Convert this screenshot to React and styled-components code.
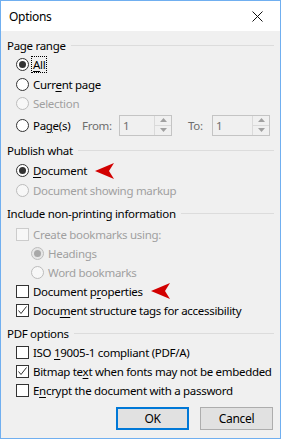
import React from "react";
import styled, { createGlobalStyle } from "styled-components";

const Global = createGlobalStyle`
  html, body {
    margin: 0;
    padding: 0;
    background: #ffffff;
  }
  body {
    font-family: "Noto Sans", "Open Sans", "Liberation Sans", sans-serif;
    font-size: 11.5px;
    letter-spacing: -0.3px;
    color: #000;
  }
`;

function RedArrow({ left }) {
  return (
    <ArrowSvg width="19" height="16" viewBox="0 0 19 16" left={left}>
      <path d="M0 8 L19 0 L14 8 L19 16 Z" fill="#d20000" />
    </ArrowSvg>
  );
}

function Check() {
  return (
    <svg width="11" height="11" viewBox="0 0 11 11">
      <polyline points="1.5,5.5 4,8.5 9.5,1.5" fill="none" stroke="#333" strokeWidth="1" />
    </svg>
  );
}

function Spin({ width }) {
  return (
    <SpinBox width={width}>
      <SpinValue>1</SpinValue>
      <SpinButtons>
        <SpinBtn>
          <svg width="7" height="4" viewBox="0 0 7 4">
            <path d="M0 4 L3.5 0 L7 4 Z" fill="#a0a0a0" />
          </svg>
        </SpinBtn>
        <SpinBtn>
          <svg width="7" height="4" viewBox="0 0 7 4">
            <path d="M0 0 L3.5 4 L7 0 Z" fill="#a0a0a0" />
          </svg>
        </SpinBtn>
      </SpinButtons>
    </SpinBox>
  );
}

export default function App() {
  return (
    <>
      <Global />
      <Window>
        <TitleBar>
          <span>Options</span>
          <svg width="11" height="11" viewBox="0 0 11 11">
            <path d="M0.5 0.5 L10.5 10.5 M10.5 0.5 L0.5 10.5" stroke="#111" strokeWidth="1" />
          </svg>
        </TitleBar>

        <Content>
          <GroupHeader>Page range</GroupHeader>
          <Rows>
            <Row h={19.5}>
              <Radio checked />
              <Focus><u>A</u>ll</Focus>
            </Row>
            <Row h={19.5}>
              <Radio />
              <span>Curr<u>e</u>nt page</span>
            </Row>
            <Row h={19.5} disabled>
              <Radio disabled />
              <span>Selection</span>
            </Row>
            <Row h={23}>
              <Radio />
              <Cell w={49}>Pa<u>g</u>e(s)</Cell>
              <Cell w={37} muted>From:</Cell>
              <Spin width={53} />
              <Cell w={24} muted pad={16}>To:</Cell>
              <Spin width={58} />
            </Row>
          </Rows>

          <GroupHeader gap={3.5}>Publish what</GroupHeader>
          <Rows top={1}>
            <Row h={19.5}>
              <Radio checked />
              <span><u>D</u>ocument</span>
              <RedArrow left={8} />
            </Row>
            <Row h={19.5} disabled>
              <Radio disabled />
              <span>Document showing markup</span>
            </Row>
          </Rows>

          <GroupHeader gap={3}>Include non-printing information</GroupHeader>
          <Rows top={1.5}>
            <Row disabled>
              <Box disabled />
              <span>Create bookmarks using:</span>
            </Row>
            <Row disabled indent>
              <Radio disabled checked />
              <span>Headings</span>
            </Row>
            <Row disabled indent>
              <Radio disabled />
              <span>Word bookmarks</span>
            </Row>
            <Row>
              <Box />
              <span>Document p<u>r</u>operties</span>
              <RedArrow left={8} />
            </Row>
            <Row>
              <Box>
                <Check />
              </Box>
              <span>Docu<u>m</u>ent structure tags for accessibility</span>
            </Row>
          </Rows>

          <GroupHeader gap={3.5}>PDF options</GroupHeader>
          <Rows>
            <Row>
              <Box />
              <span>ISO <u>1</u>9005-1 compliant (PDF/A)</span>
            </Row>
            <Row>
              <Box>
                <Check />
              </Box>
              <span>Bitmap te<u>x</u>t when fonts may not be embedded</span>
            </Row>
            <Row>
              <Box />
              <span>E<u>n</u>crypt the document with a password</span>
            </Row>
          </Rows>

          <Footer>
            <Button primary>OK</Button>
            <Button>Cancel</Button>
          </Footer>
        </Content>
      </Window>
    </>
  );
}

const Window = styled.div`
  width: 281px;
  height: 439px;
  box-sizing: border-box;
  border: 1px solid #70aff0;
  background: #f0f0f0;
  display: flex;
  flex-direction: column;
`;

const TitleBar = styled.div`
  height: 30px;
  flex: none;
  background: #ffffff;
  display: flex;
  align-items: center;
  justify-content: space-between;
  padding: 0 17px 0 8px;
  font-size: 12px;
`;

const Content = styled.div`
  padding: 4px 6px 0 6px;
  display: flex;
  flex-direction: column;
`;

const GroupHeader = styled.div`
  height: 20px;
  margin-top: ${(p) => p.gap || 0}px;
  display: flex;
  align-items: center;
  gap: 5px;
  white-space: nowrap;
  &::after {
    content: "";
    flex: 1;
    height: 1px;
    background: #dcdcdc;
  }
`;

const Rows = styled.div`
  display: flex;
  flex-direction: column;
  margin-top: ${(p) => p.top || 0}px;
`;

const Row = styled.div`
  height: ${(p) => p.h || 19}px;
  display: flex;
  align-items: center;
  padding-left: ${(p) => (p.indent ? 24 : 9)}px;
  color: ${(p) => (p.disabled ? "#a0a0a0" : "#000")};
  white-space: nowrap;

  u {
    text-decoration-thickness: 1px;
    text-underline-offset: 2px;
  }
`;

const Radio = styled.span`
  width: 13px;
  height: 13px;
  box-sizing: border-box;
  flex: none;
  margin-right: 4px;
  border-radius: 50%;
  border: 1px solid ${(p) => (p.disabled ? "#bcbcbc" : "#333")};
  background: ${(p) => (p.disabled ? (p.checked ? "#e6e6e6" : "#f7f7f7") : "#fff")};
  display: flex;
  align-items: center;
  justify-content: center;
  &::after {
    content: "";
    display: ${(p) => (p.checked ? "block" : "none")};
    width: 7px;
    height: 7px;
    border-radius: 50%;
    background: ${(p) => (p.disabled ? "#a8a8a8" : "#333")};
  }
`;

const Box = styled.span`
  width: 13px;
  height: 13px;
  box-sizing: border-box;
  flex: none;
  margin-right: 4px;
  border: 1px solid ${(p) => (p.disabled ? "#cccccc" : "#333")};
  background: ${(p) => (p.disabled ? "#f7f7f7" : "#fff")};
  display: flex;
  align-items: center;
  justify-content: center;
`;

const Focus = styled.span`
  outline: 1px dotted #000;
  outline-offset: 0px;
  padding: 0 1px;
  margin-left: -1px;
  line-height: 15px;
`;

const Cell = styled.span`
  width: ${(p) => p.w}px;
  flex: none;
  padding-left: ${(p) => p.pad || 0}px;
  color: ${(p) => (p.muted ? "#6d6d6d" : "inherit")};
`;

const SpinBox = styled.div`
  width: ${(p) => p.width}px;
  height: 21px;
  box-sizing: border-box;
  flex: none;
  border: 1px solid #c4c4c4;
  background: #f0f0f0;
  display: flex;
`;

const SpinValue = styled.span`
  flex: 1;
  padding-left: 3px;
  color: #6d6d6d;
  line-height: 19px;
`;

const SpinButtons = styled.div`
  width: 16px;
  border-left: 1px solid #dadada;
  display: flex;
  flex-direction: column;
`;

const SpinBtn = styled.div`
  flex: 1;
  display: flex;
  align-items: center;
  justify-content: center;
  & + & {
    border-top: 1px solid #dadada;
  }
`;

const ArrowSvg = styled.svg`
  margin-left: ${(p) => p.left}px;
  flex: none;
`;

const Footer = styled.div`
  display: flex;
  justify-content: flex-end;
  gap: 11px;
  margin-top: 7px;
  padding-right: 1px;
`;

const Button = styled.button`
  width: 73px;
  height: 23px;
  box-sizing: border-box;
  font-family: inherit;
  font-size: 12px;
  letter-spacing: inherit;
  color: #000;
  background: #e1e1e1;
  border: ${(p) => (p.primary ? "2px solid #0078d7" : "1px solid #adadad")};
  padding: 0;
`;
